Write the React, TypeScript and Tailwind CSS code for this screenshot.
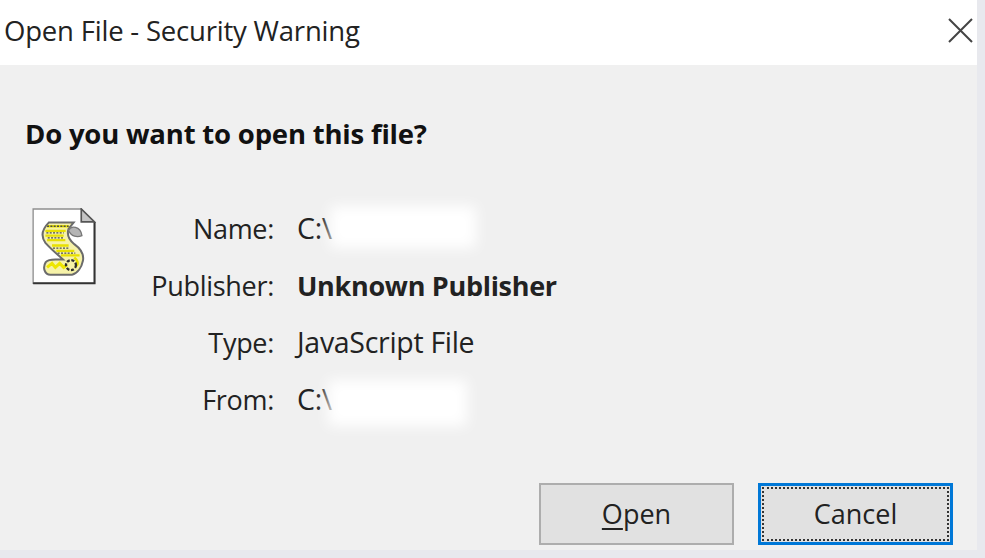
const font = "font-['Open_Sans','Noto_Sans',sans-serif]";

function ScriptIcon() {
	return (
		<svg width="64" height="77" viewBox="95 83 192 232" className="shrink-0 blur-[0.5px]">
			<path d="M98 86H243L283 125V310H98Z" fill="#fff" stroke="#8f8f8f" strokeWidth="4" />
			<path d="M283 125V310H98" fill="none" stroke="#333" strokeWidth="6" />
			<path d="M243 86V125H283Z" fill="#c4c4c4" stroke="#555" strokeWidth="5" />
			{/* scroll body */}
			<path d="M145 127H220L205 145C198 165 205 178 222 192C240 205 252 222 248 242C244 262 232 280 215 284H150C132 284 126 262 136 246C142 239 150 238 165 238H188C170 222 150 205 135 188C122 170 122 150 145 127Z" fill="#f6f2a8" stroke="#6b6b6b" strokeWidth="6" />
			<path d="M205 150C212 136 240 136 245 166C232 172 212 170 205 150Z" fill="#b4b4b4" stroke="#777" strokeWidth="4" />
			{/* text lines */}
			<path d="M140 138H205M135 152H196M135 166H190M140 180H195M155 196H205M168 212H222M182 226H238" stroke="#e8e000" strokeWidth="7" />
			<path d="M140 138H205M138 158H190M142 173H192M158 204H205M172 219H225" stroke="#4a4a4a" strokeWidth="4" strokeDasharray="6 4" />
			<path d="M140 262L155 250L165 262L178 250L190 262L200 254" fill="none" stroke="#eee600" strokeWidth="9" />
			<path d="M222 232C232 240 236 252 226 258" fill="none" stroke="#e8e000" strokeWidth="8" />
			<circle cx="212" cy="255" r="15" fill="none" stroke="#2e2e2e" strokeWidth="7" strokeDasharray="9 5" />
		</svg>
	);
}

function Redaction({ className }: { className: string }) {
	return <div className={`absolute bg-white blur-[7px] ${className}`} />;
}

function Row({ label, children }: { label: string; children: React.ReactNode }) {
	return (
		<>
			<div className="text-right text-[#222] h-[57px] leading-[57px] text-[27px] tracking-[-0.3px]">{label}</div>
			<div className="relative text-[#222] h-[57px] leading-[57px] text-[28.5px] tracking-[-0.3px]">{children}</div>
		</>
	);
}

export default function App() {
	return (
		<div className={`h-[558px] w-[985px] bg-[#e8e9ee] overflow-hidden ${font}`}>
			<div className="w-[977px] h-[550px] flex flex-col bg-[#f0f0f0]">
				<div className="h-[65px] bg-white flex items-center justify-between pl-[4px] pr-[3px] shrink-0">
					<span className="text-[#222] text-[27.5px] tracking-[-0.2px] -mt-[4px]">Open File - Security Warning</span>
					<svg width="26" height="26" viewBox="0 0 26 26" fill="none" stroke="#444" strokeWidth="2" className="-mt-[6px]">
						<path d="M1 2L24 25M24 2L1 25" />
					</svg>
				</div>
				<div className="flex-1 flex flex-col pl-[25px] pr-[24px] pt-[51px] pb-[5px]">
					<h1 className="font-bold text-[27.5px] leading-[36px] text-[#111] tracking-[-0.2px]">Do you want to open this file?</h1>
					<div className="flex mt-[56px] pl-[7px]">
						<ScriptIcon />
						<div className="grid grid-cols-[178px_1fr] gap-x-[23px] -mt-[8px] flex-1">
							<Row label="Name:">
								C:\
								<Redaction className="left-[33px] top-[6px] w-[146px] h-[42px]" />
							</Row>
							<Row label="Publisher:">
								<span className="font-bold text-[27px]">Unknown Publisher</span>
							</Row>
							<Row label="Type:">JavaScript File</Row>
							<Row label="From:">
								C:\
								<Redaction className="left-[31px] top-[9px] w-[139px] h-[46px]" />
							</Row>
						</div>
					</div>
					<div className="mt-auto flex justify-end gap-[24px]">
						<button type="button" className="w-[195px] h-[62px] bg-[#e1e1e1] border-2 border-[#adadad] text-[#222] text-[27px]">
							<span className="underline underline-offset-4">O</span>pen
						</button>
						<button type="button" className="w-[195px] h-[62px] bg-[#e1e1e1] border-[3px] border-[#0078d7] text-[#222] text-[27px] p-px">
							<span className="flex h-full w-full items-center justify-center border-2 border-dotted border-[#333]">Cancel</span>
						</button>
					</div>
				</div>
			</div>
		</div>
	);
}
